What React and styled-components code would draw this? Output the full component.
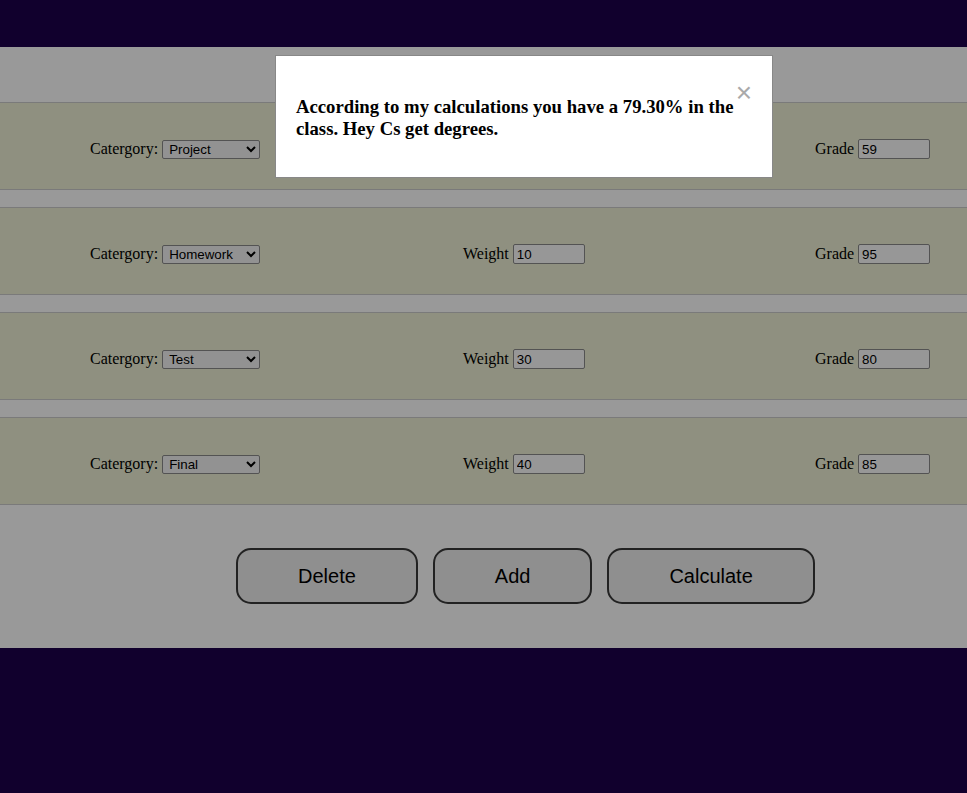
import React from 'react';
import styled, { createGlobalStyle } from 'styled-components';

const GlobalStyle = createGlobalStyle`
  body {
    margin: 0;
    background-color: #11002d;
    font-family: "Liberation Serif", "Times New Roman", serif;
  }
`;

const TopBar = styled.div`
  height: 47px;
`;

const Container = styled.div`
  position: relative;
  height: 601px;
  box-sizing: border-box;
  padding-top: 55px;
  background-color: #fff;
`;

const Row = styled.div`
  display: grid;
  grid-template-columns: 373px 352px 1fr;
  align-items: center;
  height: 80px;
  padding: 6px 0 0 90px;
  margin-bottom: 17px;
  background-color: #eef0d5;
  border-top: 1px solid #cbcbcb;
  border-bottom: 1px solid #cbcbcb;
  font-size: 16px;
  color: #000;
`;

const Field = styled.label`
  display: flex;
  align-items: center;
  gap: 4px;
`;

const Select = styled.select`
  width: 98px;
  height: 19px;
  padding: 0 2px;
  font-family: "Liberation Sans", Arial, sans-serif;
  font-size: 13.33px;
  color: #000;
  background-color: #f4f4f4;
  border: 1px solid #8a8a8a;
  border-radius: 2px;
`;

const Input = styled.input`
  width: 72px;
  height: 20px;
  box-sizing: border-box;
  padding: 1px 3px;
  font-family: "Liberation Sans", Arial, sans-serif;
  font-size: 13.33px;
  color: #000;
  background-color: #fcfcfc;
  border: 1px solid #8a8a8a;
  border-radius: 2px;
`;

const Buttons = styled.div`
  display: flex;
  gap: 15px;
  padding: 26px 0 0 236px;
`;

const Button = styled.button`
  height: 56px;
  padding: 0 60px;
  font-family: "Liberation Sans", Arial, sans-serif;
  font-size: 20px;
  color: #000;
  background-color: #efefef;
  border: 2px solid #3a3a3a;
  border-radius: 15px;
`;

const Overlay = styled.div`
  position: absolute;
  inset: 0;
  background-color: rgba(0, 0, 0, 0.4);
`;

const Modal = styled.div`
  position: absolute;
  top: 8px;
  left: 275px;
  width: 456px;
  padding: 20px;
  background-color: #fff;
  border: 1px solid #888;
`;

const Close = styled.span`
  float: right;
  margin-top: 3px;
  font-family: "Liberation Sans", Arial, sans-serif;
  font-size: 28px;
  line-height: 28px;
  color: #aaa;
`;

const Message = styled.h3`
  margin: 20px 0 17px;
  font-size: 18.72px;
  font-weight: bold;
`;

const grades = [
  { category: 'Project', weight: '', grade: '59' },
  { category: 'Homework', weight: '10', grade: '95' },
  { category: 'Test', weight: '30', grade: '80' },
  { category: 'Final', weight: '40', grade: '85' },
];

const categories = ['Homework', 'Quiz', 'Test', 'Project', 'Final'];

export default function App() {
  return (
    <>
      <GlobalStyle />
      <TopBar />
      <Container>
        {grades.map((g, i) => (
          <Row key={i}>
            <Field>
              Catergory:
              <Select defaultValue={g.category}>
                {categories.map(c => (
                  <option key={c}>{c}</option>
                ))}
              </Select>
            </Field>
            <Field>
              Weight
              <Input defaultValue={g.weight} />
            </Field>
            <Field>
              Grade
              <Input defaultValue={g.grade} />
            </Field>
          </Row>
        ))}
        <Buttons>
          <Button>Delete</Button>
          <Button>Add</Button>
          <Button>Calculate</Button>
        </Buttons>
        <Overlay />
        <Modal>
          <Close>×</Close>
          <Message>
            According to my calculations you have a 79.30% in the class. Hey Cs get degrees.
          </Message>
        </Modal>
      </Container>
    </>
  );
}
